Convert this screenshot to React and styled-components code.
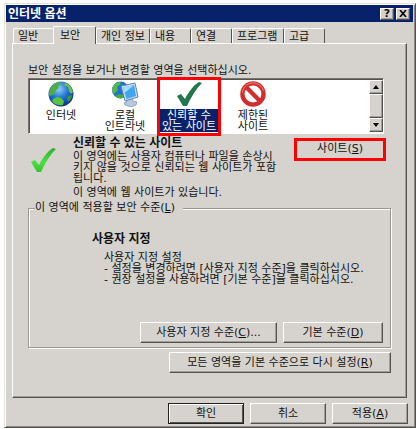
import styled, { createGlobalStyle, css } from 'styled-components';

const GlobalStyle = createGlobalStyle`
  * {
    box-sizing: border-box;
  }

  body {
    margin: 0;
    background: #fff;
    color: #111;
    font-family: 'DejaVu Sans', 'Noto Sans CJK KR', sans-serif;
    font-size: 11px;
    line-height: 14px;
  }

  button {
    font: inherit;
    color: #111;
  }

  p, h1, h2 {
    margin: 0;
    font-size: 11px;
  }
`;

const raised = css`
  border: 1px solid;
  border-color: #fff #55534f #55534f #fff;
  box-shadow: inset -1px -1px #a19e99;
`;

const Page = styled.main`
  padding: 3px 0 1px 4px;
`;

const Dialog = styled.section`
  background: #d6d3ce;
  border: 1px solid;
  border-color: #e4e2de #55534f #55534f #e4e2de;
  box-shadow: inset 1px 1px #fff, inset -1px -1px #8b8985;
  padding: 1px 2px 3px 1px;
`;

const TitleBar = styled.header`
  display: flex;
  align-items: center;
  height: 17px;
  padding: 0 3px 0 2px;
  background: #08216b;
  color: #fff;
`;

const Title = styled.h1`
  flex: 1;
  font-family: 'Liberation Sans', 'Noto Sans CJK KR', sans-serif;
  font-size: 12px;
  font-weight: 700;
`;

const CaptionButton = styled.button`
  ${raised}
  display: flex;
  align-items: center;
  justify-content: center;
  width: 14px;
  height: 12px;
  margin-left: 2px;
  padding: 0;
  background: #d6d3ce;
  font-weight: 700;
  line-height: 10px;
`;

const Tabs = styled.nav`
  display: flex;
  align-items: flex-end;
  height: 21px;
  padding-left: 7px;
`;

const Tab = styled.button`
  width: ${(p) => p.$width}px;
  height: ${(p) => (p.$active ? 18 : 15)}px;
  margin-bottom: ${(p) => (p.$active ? -1 : 0)}px;
  padding: 1px 0 0 ${(p) => (p.$active ? 6 : 4)}px;
  position: relative;
  z-index: ${(p) => (p.$active ? 1 : 0)};
  background: #d6d3ce;
  border: 0 solid;
  border-width: 1px ${(p) => (p.$edge ? 1 : 0)}px 0 1px;
  border-color: #fff #55534f #fff #fff;
  border-radius: 2px 2px 0 0;
  text-align: left;
  line-height: 14px;
  white-space: nowrap;
`;

const Panel = styled.div`
  ${raised}
  margin: 0 6px 0 6px;
  padding: 20px 15px 24px 15px;
`;

const ZoneLabel = styled.p`
  line-height: 14px;
`;

const ZoneBox = styled.div`
  display: flex;
  height: 56px;
  margin-right: 7px;
  background: #fff;
  border: 1px solid;
  border-color: #77746f #fff #fff #77746f;
  box-shadow: inset 1px 1px #55534f;
`;

const Zones = styled.div`
  flex: 1;
  display: grid;
  grid-template-columns: repeat(4, 64px);
`;

const Zone = styled.button`
  display: flex;
  flex-direction: column;
  align-items: center;
  height: ${(p) => (p.$selected ? 59 : 54)}px;
  margin: ${(p) => (p.$selected ? '-2px 0 0' : '0')};
  padding: ${(p) => (p.$selected ? 1 : 2)}px 0 0;
  background: ${(p) => (p.$selected ? '#fff' : 'transparent')};
  border: 0 solid #f00;
  border-width: ${(p) => (p.$selected ? 3 : 0)}px;
  line-height: 11px;
`;

const ZoneName = styled.span`
  width: 100%;
  margin-top: 2px;
  padding-top: 1px;
  background: ${(p) => (p.$selected ? '#08216b' : 'transparent')};
  color: ${(p) => (p.$selected ? '#fff' : '#111')};
  white-space: nowrap;
`;

const ScrollBar = styled.div`
  display: flex;
  flex-direction: column;
  width: 14px;
  margin: 1px 0;
  background: #d6d3ce;
`;

const ScrollButton = styled.button`
  ${raised}
  display: flex;
  align-items: center;
  justify-content: center;
  height: 14px;
  padding: 0;
  background: #d6d3ce;
`;

const Thumb = styled.div`
  ${raised}
  height: 24px;
`;

const ZoneInfo = styled.div`
  display: grid;
  grid-template-columns: 45px 1fr auto;
  height: 66px;
  padding-top: 2px;
`;

const CheckCell = styled.div`
  padding: 11px 0 0 2px;
`;

const Heading = styled.h2`
  font-family: 'Liberation Sans', 'Noto Sans CJK KR', sans-serif;
  font-size: 12px;
  font-weight: 700;
  line-height: 14px;
`;

const Text = styled.p`
  line-height: 11px;
  margin-top: ${(p) => p.$gap || 0}px;
  white-space: nowrap;
`;

const SitesButton = styled.button`
  align-self: start;
  width: 92px;
  height: 23px;
  margin-left: -92px;
  margin-right: 5px;
  margin-top: 2px;
  padding: 0 0 1px;
  background: #d6d3ce;
  border: 3px solid #f00;
`;

const Level = styled.fieldset`
  min-width: 0;
  height: 148px;
  margin: 0;
  padding: 16px 7px 4px;
  border: 1px solid #9b9893;
  box-shadow: inset 1px 1px #fff, 1px 1px #fff;
  display: flex;
  flex-direction: column;
`;

const Legend = styled.legend`
  margin-left: -1px;
  padding: 0 8px 0 0;
  background: #d6d3ce;
  line-height: 16px;
`;

const LevelText = styled.div`
  flex: 1;
  padding-left: 56px;
`;

const Description = styled.div`
  padding-left: 12px;
`;

const Buttons = styled.div`
  display: flex;
  justify-content: flex-end;
  gap: 6px;
`;

const Button = styled.button`
  ${raised}
  width: ${(p) => p.$width}px;
  height: 21px;
  padding: 0;
  background: #d6d3ce;
  white-space: nowrap;
  ${(p) => p.$primary && css`
    border-color: #222;
    box-shadow: inset 1px 1px #fff, inset -1px -1px #55534f;
  `}
`;

const ResetRow = styled(Buttons)`
  margin-top: 4px;
`;

const Footer = styled(Buttons)`
  padding: 5px 5px 0;
`;

const Globe = () => (
  <svg width="26" height="26" viewBox="0 0 26 26" aria-hidden="true">
    <defs>
      <radialGradient id="sea" cx="42%" cy="30%" r="72%">
        <stop offset="0" stopColor="#8fd0fa" />
        <stop offset="0.5" stopColor="#2374d2" />
        <stop offset="1" stopColor="#0a2c86" />
      </radialGradient>
    </defs>
    <circle cx="13" cy="13" r="12.5" fill="url(#sea)" />
    <path d="M2 9C4 4 8 1 12 1l1 2-3 2 1 2-3 2-2 4-3 2-2-1c0-2 0-3 1-5Z" fill="#4fae3f" />
    <path d="M17 2c4 1 7 5 8 9l-2 2-2-3-1-4-4-2Z" fill="#6cc247" />
    <path d="M5 18l4-2 4 1 3 3-1 4c-5 1-9-1-11-4Z" fill="#5cc33c" />
    <path d="M20 15l4-1c0 3-2 5-4 7l-1-3Z" fill="#3a9a3e" />
  </svg>
);

const Network = () => (
  <svg width="28" height="26" viewBox="0 0 28 26" aria-hidden="true">
    <circle cx="9.5" cy="9" r="8.5" fill="#1c72cf" />
    <path d="M1 9C2 3 6 1 10 1l-1 3-3 2 1 3-3 3-2 1Z" fill="#55b949" />
    <path d="M4 15l4-2 4 1v3c-3 1-6 0-8-2Z" fill="#46ad3d" />
    <path d="M15 19l6-2 1 3 4 1-1 3-5 2-6-2-1-2 3-1Z" fill="#b8c9df" stroke="#7691b5" strokeWidth="0.7" />
    <path d="M10 5l14-3 3 14-13 4Z" fill="#c9dbf0" stroke="#5f83b8" />
    <path d="M12 6.500l11-2.500 2 11-9.500 3Z" fill="#43a5ed" />
    <path d="M12 6.500l11-2.500-9.500 8Z" fill="#a4dcfb" />
  </svg>
);

const Check = ({ bright }) => (
  <svg width="26" height="26" viewBox="0 0 26 26" aria-hidden="true">
    <defs>
      <linearGradient id="lime" x1="0" y1="0" x2="0" y2="1">
        <stop offset="0" stopColor="#2fae2f" />
        <stop offset="0.6" stopColor="#4be044" />
        <stop offset="1" stopColor="#2fc32f" />
      </linearGradient>
    </defs>
    <path d="M1 15l4-2 4 5C13 10 18 4 23 1l3 1C20 8 15 16 11 25H7Z" fill={bright ? 'url(#lime)' : '#24764f'} />
  </svg>
);

const Forbidden = () => (
  <svg width="28" height="26" viewBox="0 0 28 27" aria-hidden="true">
    <circle cx="14" cy="13.5" r="11" fill="#fff" stroke="#d22d2d" strokeWidth="4.5" />
    <path d="M6.5 6l15 15" stroke="#d22d2d" strokeWidth="4.5" />
    <path d="M3 12C4 5 9 2 14 2s9 3 11 8" fill="none" stroke="#f18883" />
  </svg>
);

const Arrow = ({ down }) => (
  <svg width="6" height="4" viewBox="0 0 6 4" aria-hidden="true">
    <path d={down ? 'M0 0h6L3 4Z' : 'M0 4h6L3 0Z'} fill="#000" />
  </svg>
);

const tabs = [
  { name: '일반', width: 40 },
  { name: '보안', width: 43, active: true, edge: true },
  { name: '개인 정보', width: 54, edge: true },
  { name: '내용', width: 41, edge: true },
  { name: '연결', width: 41, edge: true },
  { name: '프로그램', width: 52, edge: true },
  { name: '고급', width: 41, edge: true },
];

const zones = [
  { lines: ['인터넷'], Icon: Globe },
  { lines: ['로컬', '인트라넷'], Icon: Network },
  { lines: ['신뢰할 수', '있는 사이트'], Icon: Check, selected: true },
  { lines: ['제한된', '사이트'], Icon: Forbidden },
];

const App = () => {
  return (
    <Page>
      <GlobalStyle />
      <Dialog>
        <TitleBar>
          <Title>인터넷 옵션</Title>
          <CaptionButton aria-label="도움말">?</CaptionButton>
          <CaptionButton aria-label="닫기">
            <svg width="8" height="7" viewBox="0 0 8 7" aria-hidden="true">
              <path d="M1 0l6 7M7 0L1 7" stroke="#000" strokeWidth="1.6" />
            </svg>
          </CaptionButton>
        </TitleBar>
        <Tabs>
          {tabs.map((t) => (
            <Tab key={t.name} $width={t.width} $active={t.active} $edge={t.edge}>{t.name}</Tab>
          ))}
        </Tabs>
        <Panel>
          <ZoneLabel>보안 설정을 보거나 변경할 영역을 선택하십시오.</ZoneLabel>
          <ZoneBox>
            <Zones>
              {zones.map(({ lines, Icon, selected }) => (
                <Zone key={lines[0]} $selected={selected}>
                  <Icon />
                  <ZoneName $selected={selected}>
                    {lines[0]}
                    {lines[1] && <br />}
                    {lines[1]}
                  </ZoneName>
                </Zone>
              ))}
            </Zones>
            <ScrollBar>
              <ScrollButton aria-label="위로"><Arrow /></ScrollButton>
              <Thumb />
              <ScrollButton aria-label="아래로"><Arrow down /></ScrollButton>
            </ScrollBar>
          </ZoneBox>
          <ZoneInfo>
            <CheckCell><Check bright /></CheckCell>
            <div>
              <Heading>신뢰할 수 있는 사이트</Heading>
              <Text $gap={1}>
                이 영역에는 사용자 컴퓨터나 파일을 손상시<br />
                키지 않을 것으로 신뢰되는 웹 사이트가 포함<br />
                됩니다.
              </Text>
              <Text $gap={3}>이 영역에 웹 사이트가 있습니다.</Text>
            </div>
            <SitesButton>사이트(<u>S</u>)</SitesButton>
          </ZoneInfo>
          <Level>
            <Legend>이 영역에 적용할 보안 수준(<u>L</u>)</Legend>
            <LevelText>
              <Heading>사용자 지정</Heading>
              <Description>
                <Text $gap={6}>
                  사용자 지정 설정<br />
                  - 설정을 변경하려면 [사용자 지정 수준]을 클릭하십시오.<br />
                  - 권장 설정을 사용하려면 [기본 수준]을 클릭하십시오.
                </Text>
              </Description>
            </LevelText>
            <Buttons>
              <Button $width={137}>사용자 지정 수준(<u>C</u>)...</Button>
              <Button $width={100}>기본 수준(<u>D</u>)</Button>
            </Buttons>
          </Level>
          <ResetRow>
            <Button $width={222}>모든 영역을 기본 수준으로 다시 설정(<u>R</u>)</Button>
          </ResetRow>
        </Panel>
        <Footer>
          <Button $width={76} $primary>확인</Button>
          <Button $width={76}>취소</Button>
          <Button $width={76}>적용(<u>A</u>)</Button>
        </Footer>
      </Dialog>
    </Page>
  );
};

export default App;
